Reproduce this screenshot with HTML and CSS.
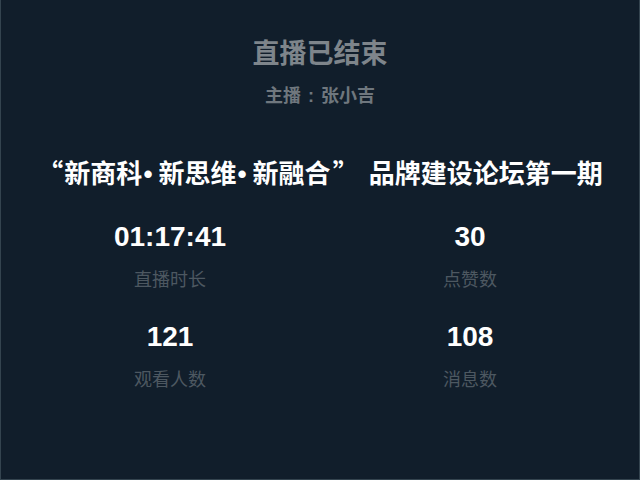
FILE: index.html
```html
<!DOCTYPE html>
<html lang="zh-CN">
<head>
<meta charset="utf-8">
<title>直播已结束</title>
<link rel="stylesheet" href="styles.css">
</head>
<body>
<div class="page">
  <h1 class="title">直播已结束</h1>
  <div class="host">主播<span class="colon">:</span>张小吉</div>
  <h2 class="headline"><span class="ql">“</span>新商科<span class="dot">•</span>新思维<span class="dot">•</span>新融合<span class="qr">”</span>品牌建设论坛第一期</h2>
  <div class="stats">
    <div class="stat">
      <div class="num">01:17:41</div>
      <div class="label">直播时长</div>
    </div>
    <div class="stat">
      <div class="num">30</div>
      <div class="label">点赞数</div>
    </div>
    <div class="stat">
      <div class="num">121</div>
      <div class="label">观看人数</div>
    </div>
    <div class="stat">
      <div class="num">108</div>
      <div class="label">消息数</div>
    </div>
  </div>
</div>
</body>
</html>
```

FILE: styles.css
```css
html, body {
  margin: 0;
  padding: 0;
  background: #111e2b;
}
body {
  font-family: "Noto Sans CJK SC", "Liberation Sans", sans-serif;
}
.page {
  box-sizing: border-box;
  width: 640px;
  height: 480px;
  border: 1px solid #34444f;
  border-top: none;
  display: flex;
  flex-direction: column;
  align-items: center;
  padding-top: 36px;
}
.title {
  margin: 0;
  font-size: 27px;
  line-height: 32px;
  font-weight: bold;
  color: #7e858b;
}
.host {
  margin-top: 14px;
  height: 24px;
  font-size: 18px;
  line-height: 24px;
  color: #6f777e;
  font-weight: bold;
}
.colon {
  font-family: "Liberation Sans", sans-serif;
  margin: 0 7px;
}
.headline {
  margin: 50px 0 0;
  height: 32px;
  font-size: 26px;
  line-height: 32px;
  font-weight: bold;
  color: #ffffff;
  white-space: nowrap;
}
.ql {
  margin-right: 1px;
}
.qr {
  margin-left: 2px;
  margin-right: 10px;
}
.dot {
  font-family: "Liberation Sans", sans-serif;
  margin-left: 1px;
  margin-right: 6px;
}
.stats {
  margin-top: 33px;
  width: 600px;
  display: grid;
  grid-template-columns: 300px 300px;
  row-gap: 31px;
}
.stat {
  display: flex;
  flex-direction: column;
  align-items: center;
  gap: 13px;
}
.num {
  font-family: "Liberation Sans", "Noto Sans CJK SC", sans-serif;
  font-size: 28px;
  line-height: 32px;
  font-weight: bold;
  color: #ffffff;
}
.label {
  font-size: 18px;
  line-height: 24px;
  color: #4d5861;
}
```
